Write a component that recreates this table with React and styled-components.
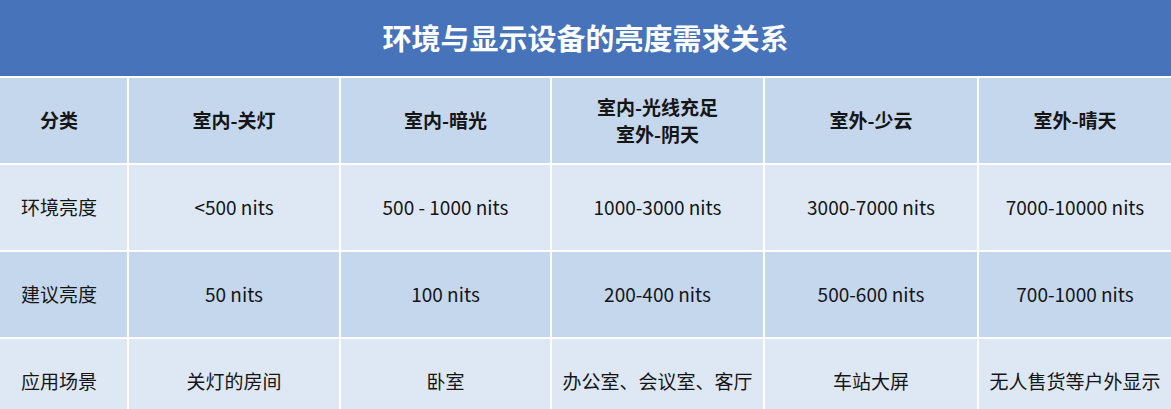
import React from "react";
import styled, { createGlobalStyle } from "styled-components";

const Global = createGlobalStyle`
  html, body { margin: 0; padding: 0; overflow: hidden; background: #ffffff; }
  body { font-family: "Noto Sans CJK SC", "Noto Sans", sans-serif; }
`;

const Table = styled.div`
  width: 1171px;
  display: grid;
  grid-template-columns: 127px 210px 209px 211px 212px 1fr;
  grid-template-rows: 76px 85px 85px 85px 85px;
  gap: 2px;
  background: #ffffff;
`;

const Title = styled.div`
  grid-column: 1 / -1;
  background: #4673b9;
  color: #ffffff;
  font-size: 29px;
  font-weight: 700;
  display: flex;
  align-items: center;
  justify-content: center;
  padding-bottom: 3px;
`;

const Cell = styled.div`
  background: ${(p) => (p.$tone === "dark" ? "#c5d7ed" : "#dee8f5")};
  color: #151515;
  font-size: 19px;
  font-weight: ${(p) => (p.$bold ? 700 : 400)};
  line-height: 27px;
  display: flex;
  align-items: center;
  justify-content: center;
  text-align: center;
  white-space: nowrap;
  padding-right: ${(p) => (p.$first ? "9px" : "0")};
  padding-bottom: 2px;
`;

const header = ["分类", "室内-关灯", "室内-暗光", ["室内-光线充足", "室外-阴天"], "室外-少云", "室外-晴天"];
const rows = [
  { tone: "light", cells: ["环境亮度", "<500 nits", "500 - 1000 nits", "1000-3000 nits", "3000-7000 nits", "7000-10000 nits"] },
  { tone: "dark", cells: ["建议亮度", "50 nits", "100 nits", "200-400 nits", "500-600 nits", "700-1000 nits"] },
  { tone: "light", cells: ["应用场景", "关灯的房间", "卧室", "办公室、会议室、客厅", "车站大屏", "无人售货等户外显示"] },
];

export default function App() {
  return (
    <>
      <Global />
      <Table>
        <Title>环境与显示设备的亮度需求关系</Title>
        {header.map((h, i) => (
          <Cell key={"h" + i} $tone="dark" $bold $first={i === 0}>
            {Array.isArray(h) ? (
              <span>
                {h[0]}
                <br />
                {h[1]}
              </span>
            ) : (
              h
            )}
          </Cell>
        ))}
        {rows.map((r, ri) =>
          r.cells.map((c, ci) => (
            <Cell key={ri + "-" + ci} $tone={r.tone} $first={ci === 0}>
              {c}
            </Cell>
          ))
        )}
      </Table>
    </>
  );
}
